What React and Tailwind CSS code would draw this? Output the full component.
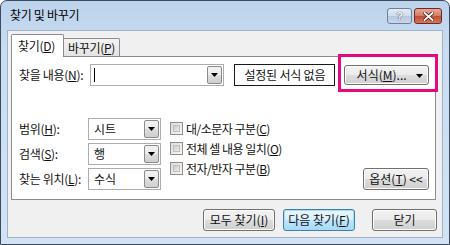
import React from "react";

const F = { fontFamily: '"Malgun Gothic","Noto Sans CJK KR","Noto Sans",sans-serif' };

function U({ c }) {
  return <span className="underline underline-offset-[1px]">{c}</span>;
}

function Arrow() {
  return (
    <svg width="7" height="4" viewBox="0 0 7 4">
      <path d="M0 0 H7 L3.5 4 Z" fill="#000" />
    </svg>
  );
}

function Combo({ w, text, caret }) {
  return (
    <div
      className={`flex h-[22px] border border-[#abadb3] bg-white ${w}`}
    >
      <div className="flex-1 flex items-center pl-[5px] text-[12px] text-[#111] leading-none">
        {caret ? <span className="w-px h-[14px] bg-black ml-[-2px]" /> : text}
      </div>
      <div className="w-[15px] m-px flex items-center justify-center border border-[#8c8c8c] rounded-[2px] bg-[linear-gradient(#f2f2f2_0%,#ebebeb_50%,#dddddd_51%,#cfcfcf_100%)]">
        <Arrow />
      </div>
    </div>
  );
}

function Btn({ children, cls = "", def = false }) {
  return (
    <div
      className={`flex items-center justify-center rounded-[3px] border text-[12px] text-[#111] leading-none ${
        def
          ? "border-[#3c7fb1] shadow-[inset_0_0_0_1px_#a8dcf5] bg-[linear-gradient(#eaf6fd_0%,#d9f0fc_50%,#bee6fd_51%,#a7d9f5_100%)]"
          : "border-[#707070] shadow-[inset_0_0_0_1px_#fcfcfc] bg-[linear-gradient(#f2f2f2_0%,#ebebeb_50%,#dddddd_51%,#cfcfcf_100%)]"
      } ${cls}`}
    >
      {children}
    </div>
  );
}

function Check({ children }) {
  return (
    <div className="flex items-center h-[13px]">
      <div className="w-[13px] h-[13px] border border-[#8e8f8f] bg-[linear-gradient(135deg,#dcdcdc,#f6f6f6)] p-[2px]">
        <div className="w-full h-full border border-[#c0c0c0] bg-[linear-gradient(135deg,#cbcbcb,#ececec)]" />
      </div>
      <span className="ml-[3px] text-[12px] text-[#111] leading-none tracking-[-0.5px]">{children}</span>
    </div>
  );
}

export default function App() {
  return (
    <div className="w-[450px] h-[245px] bg-white" style={F}>
      <div className="relative w-[450px] h-[245px] rounded-t-[7px] border border-[#3b4a5f] bg-[linear-gradient(#bcd3ec_0%,#c9dcf1_20%,#d3e3f4_100%)] flex flex-col overflow-hidden">
        {/* title bar */}
        <div className="h-[29px] flex items-center pl-[9px] pr-[7px]">
          <span className="text-[12px] text-black leading-none tracking-[-0.3px] mt-[-1px]">찾기 및 바꾸기</span>
          <div className="ml-auto flex items-start self-start mt-[7px] gap-[2px]">
            <div className="w-[25px] h-[16px] rounded-[3px] border border-[#6f7f95] bg-[linear-gradient(#e3ecf7_0%,#cfdcec_50%,#b5c7df_51%,#c7d8ec_100%)] flex items-center justify-center">
              <span className="text-[11px] font-bold text-white leading-none [text-shadow:0_0_1px_#3c4a60,0_0_1px_#3c4a60]" style={{ fontFamily: '"Liberation Sans",sans-serif' }}>?</span>
            </div>
            <div className="w-[28px] h-[16px] rounded-[3px] border border-[#6b2a22] bg-[linear-gradient(#e7a796_0%,#d67a62_50%,#c24b33_51%,#d2765c_100%)] flex items-center justify-center">
              <svg width="11" height="9" viewBox="0 0 11 9">
                <path d="M1.5 1 L9.5 8 M9.5 1 L1.5 8" stroke="#5a2018" strokeWidth="3.4" strokeLinecap="square" />
                <path d="M1.5 1 L9.5 8 M9.5 1 L1.5 8" stroke="#fff" strokeWidth="1.8" strokeLinecap="square" />
              </svg>
            </div>
          </div>
        </div>
        {/* client area */}
        <div className="mx-[6px] h-[208px] bg-[#f0f0f0] border border-[#9eb3cc] flex flex-col">
          {/* tabs */}
          <div className="flex items-end pl-[3px] pt-[2px] h-[25px]">
            <div className="relative z-10 w-[53px] h-[23px] border border-b-0 border-[#898c95] bg-white flex items-center pl-[6px] text-[12px] leading-none text-[#111] tracking-[-0.3px] mb-[-1px] rounded-t-[2px]">
              찾기(<U c="D" />)
            </div>
            <div className="w-[56px] h-[18px] border border-l-0 border-b-0 border-[#898c95] bg-[linear-gradient(#f3f3f3,#e3e3e3)] flex items-center justify-center text-[12px] leading-none text-[#111] tracking-[-0.3px] rounded-tr-[2px]">
              바꾸기(<U c="P" />)
            </div>
          </div>
          {/* panel */}
          <div className="ml-[3px] w-[425px] h-[144px] border border-[#898c95] bg-white flex flex-col pl-[7px] pr-[6px]">
            <div className="flex items-center mt-[7px] h-[22px]">
              <span className="w-[71px] text-[12px] text-[#111] leading-none tracking-[-0.3px]">찾을 내용(<U c="N" />):</span>
              <Combo w="w-[135px]" caret />
              <div className="ml-[10px] w-[101px] h-[22px] border border-[#1a1a1a] bg-white flex items-center justify-center text-[12px] leading-none text-[#111] tracking-[-0.2px]">
                설정된 서식 없음
              </div>
              <Btn cls="ml-[9px] w-[85px] h-[20px] relative pr-[10px]">
                서식(<U c="M" />)...
                <span className="absolute right-[5px] top-[8px] flex"><Arrow /></span>
              </Btn>
            </div>
            <div className="flex mt-[32px]">
              <div className="flex flex-col gap-[3px]">
                {[
                  ["범위(", "H", "):", "시트"],
                  ["검색(", "S", "):", "행"],
                  ["찾는 위치(", "L", "):", "수식"],
                ].map(([a, b, c, v]) => (
                  <div key={b} className="flex items-center h-[22px]">
                    <span className="w-[69px] text-[12px] text-[#111] leading-none tracking-[-0.3px]">
                      {a}
                      <U c={b} />
                      {c}
                    </span>
                    <Combo w="w-[73px]" text={v} />
                  </div>
                ))}
              </div>
              <div className="ml-[9px] flex flex-col gap-[7px] mt-[4px]">
                <Check>대/소문자 구분(<U c="C" />)</Check>
                <Check>전체 셀 내용 일치(<U c="O" />)</Check>
                <Check>전자/반자 구분(<U c="B" />)</Check>
              </div>
              <div className="ml-auto self-end">
                <Btn cls="w-[66px] h-[22px]">
                  옵션(<U c="T" />)&nbsp;&lt;&lt;
                </Btn>
              </div>
            </div>
          </div>
          {/* bottom buttons */}
          <div className="flex mt-[9px] pl-[195px] gap-[8px]">
            <Btn cls="w-[72px] h-[22px]">모두 찾기(<U c="I" />)</Btn>
            <Btn def cls="w-[72px] h-[22px]">다음 찾기(<U c="F" />)</Btn>
            <Btn cls="w-[65px] h-[22px] ml-[9px]">닫기</Btn>
          </div>
        </div>
        {/* annotation highlight */}
        <div className="absolute left-[337px] top-[53px] w-[100px] h-[38px] border-[3px] border-[#e5087f]" />
      </div>
    </div>
  );
}
